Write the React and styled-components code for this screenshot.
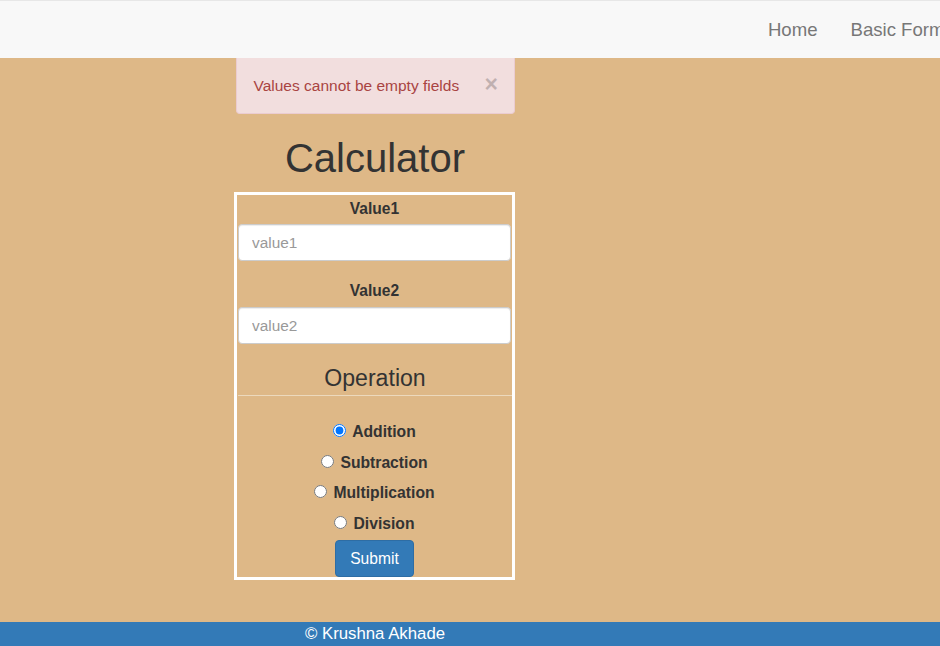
import React from "react";
import styled, { createGlobalStyle } from "styled-components";

const Global = createGlobalStyle`
  html, body { margin: 0; padding: 0; }
  body {
    font-family: "Liberation Sans", Arial, Helvetica, sans-serif;
    font-size: 15.4px;
    line-height: 22px;
    color: #333;
    background: #deb887;
    overflow-x: hidden;
  }
  * { box-sizing: border-box; }
`;

const Page = styled.div`
  min-height: 100vh;
  display: flex;
  flex-direction: column;
`;

const Navbar = styled.nav`
  height: 58px;
  background: #f8f8f8;
  border-top: 1px solid #e7e7e7;
  display: flex;
  justify-content: flex-end;
  align-items: center;
  overflow: hidden;
`;

const NavList = styled.ul`
  list-style: none;
  margin: 0 -21px 0 0;
  padding: 0;
  display: flex;
  flex-shrink: 0;
`;

const NavLink = styled.a`
  display: block;
  padding: 0 16.5px;
  font-size: 18.6px;
  line-height: 22px;
  color: #777;
  text-decoration: none;
  white-space: nowrap;
`;

const Main = styled.main`
  flex: 1;
  display: flex;
`;

const Column = styled.div`
  margin-left: 25%;
  width: 280px;
  display: flex;
  flex-direction: column;
`;

const Alert = styled.div`
  display: flex;
  justify-content: space-between;
  align-items: flex-start;
  padding: 16.5px 16px 16.5px 16.5px;
  margin-left: 1px;
  width: 279px;
  background: #f2dede;
  border: 1px solid #ebccd1;
  border-top: none;
  border-radius: 0 0 4px 4px;
  color: #a94442;
  font-size: 15.5px;
  line-height: 22px;
`;

const Close = styled.span`
  font-size: 23px;
  font-weight: bold;
  line-height: 20px;
  color: #000;
  opacity: 0.2;
  margin-top: -1px;
`;

const Title = styled.h1`
  margin: 22px 0 12px;
  font-size: 40px;
  font-weight: 400;
  line-height: 44px;
  text-align: center;
  color: #333;
`;

const Box = styled.form`
  border: 3px solid #fff;
  margin-left: -1px;
  width: 281px;
  display: flex;
  flex-direction: column;
  align-items: stretch;
`;

const Label = styled.label`
  display: block;
  text-align: center;
  font-weight: bold;
  font-size: 15.6px;
  line-height: 22px;
  margin-top: ${(p) => p.$mt}px;
  margin-bottom: ${(p) => p.$mb}px;
`;

const Input = styled.input`
  display: block;
  margin-left: 1px;
  width: 273px;
  height: 37px;
  padding: 0 13px;
  font-family: inherit;
  font-size: 15.4px;
  color: #555;
  background: #fff;
  border: 1px solid #ccc;
  border-radius: 4px;
  box-shadow: inset 0 1px 1px rgba(0, 0, 0, 0.075);
  &::placeholder { color: #999; }
`;

const Legend = styled.div`
  margin-top: 18px;
  margin-left: 1px;
  text-align: center;
  font-size: 23.1px;
  line-height: 33px;
  border-bottom: 1px solid #ecd9bd;
`;

const Radios = styled.div`
  margin-top: 21px;
  display: flex;
  flex-direction: column;
  align-items: center;
`;

const RadioRow = styled.label`
  height: 30.5px;
  display: flex;
  align-items: center;
  font-weight: bold;
  font-size: 15.7px;
`;

const Radio = styled.input`
  width: 13px;
  height: 13px;
  margin: -3px 6px 0 0;
`;

const Submit = styled.button`
  align-self: center;
  margin-top: 1px;
  height: 37px;
  padding: 0 14px;
  font-family: inherit;
  font-size: 15.6px;
  color: #fff;
  background: #337ab7;
  border: 1px solid #2e6da4;
  border-radius: 4px;
  cursor: pointer;
`;

const Footer = styled.footer`
  height: 24px;
  background: #337ab7;
  display: flex;
`;

const FooterText = styled.div`
  margin-left: 25%;
  width: 280px;
  text-align: center;
  color: #fff;
  font-size: 16.8px;
  line-height: 24px;
`;

const ops = ["Addition", "Subtraction", "Multiplication", "Division"];

export default function App() {
  return (
    <>
      <Global />
      <Page>
        <Navbar>
          <NavList>
            <li><NavLink href="#">Home</NavLink></li>
            <li><NavLink href="#">Basic Form</NavLink></li>
          </NavList>
        </Navbar>
        <Main>
          <Column>
            <Alert>
              <span>Values cannot be empty fields</span>
              <Close>×</Close>
            </Alert>
            <Title>Calculator</Title>
            <Box onSubmit={(e) => e.preventDefault()}>
              <Label $mt={3} $mb={4}>Value1</Label>
              <Input placeholder="value1" />
              <Label $mt={19} $mb={5}>Value2</Label>
              <Input placeholder="value2" />
              <Legend>Operation</Legend>
              <Radios>
                {ops.map((op, i) => (
                  <RadioRow key={op}>
                    <Radio type="radio" name="op" defaultChecked={i === 0} />
                    {op}
                  </RadioRow>
                ))}
              </Radios>
              <Submit type="submit">Submit</Submit>
            </Box>
          </Column>
        </Main>
        <Footer>
          <FooterText>© Krushna Akhade</FooterText>
        </Footer>
      </Page>
    </>
  );
}
